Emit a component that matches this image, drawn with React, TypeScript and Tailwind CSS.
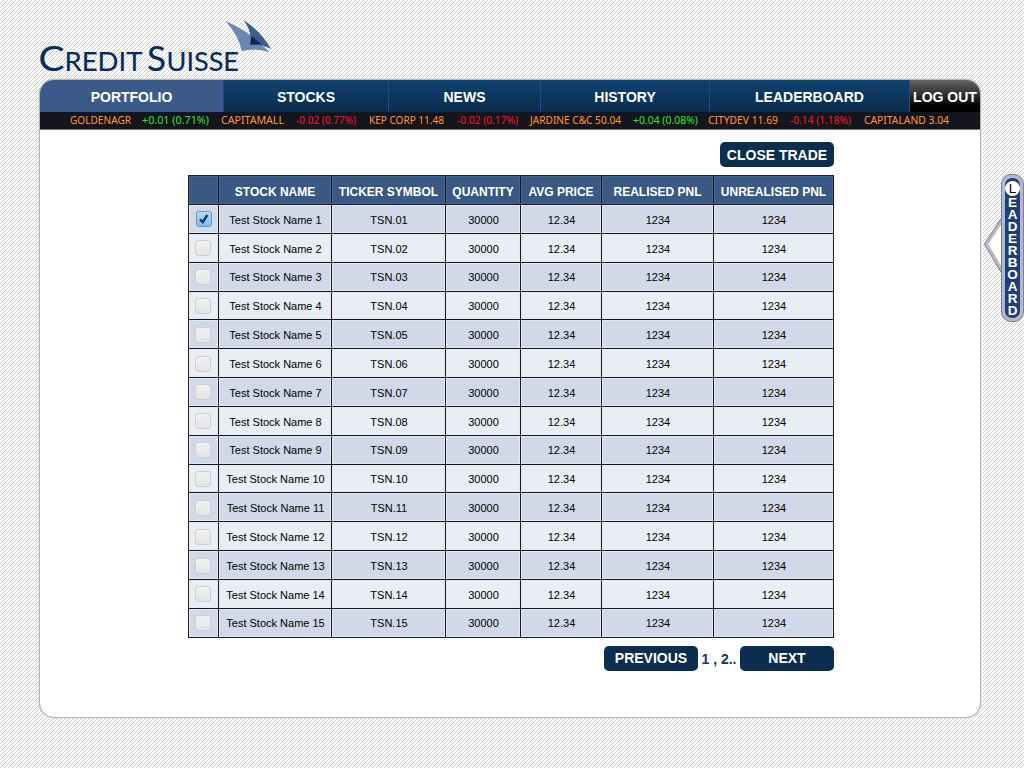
import React from "react";

const navItems = [
  { label: "PORTFOLIO", cls: "w-[183px] bg-[#3b5a88]" },
  { label: "STOCKS", cls: "w-[165px] border-l border-[#1c4a94] bg-linear-to-b from-[#0f4270] to-[#0d2c4c]" },
  { label: "NEWS", cls: "w-[152px] border-l border-[#1c4a94] bg-linear-to-b from-[#0f4270] to-[#0d2c4c]" },
  { label: "HISTORY", cls: "w-[169px] border-l border-[#1c4a94] bg-linear-to-b from-[#0f4270] to-[#0d2c4c]" },
  { label: "LEADERBOARD", cls: "w-[201px] border-x border-[#1c4a94] bg-linear-to-b from-[#0f4270] to-[#0d2c4c]" },
  { label: "LOG OUT", cls: "w-[70px] bg-linear-to-b from-[#666464] via-[#2c2a2a] to-[#000000]" },
];

// Each quote owns a fixed slot of the ticker; `len` is the drawn width.
const quotes = [
  { text: "GOLDENAGR", slot: 72, len: 61, cls: "fill-[#ff9a2e]" },
  { text: "+0.01 (0.71%)", slot: 79, len: 67, cls: "fill-[#2fe332]" },
  { text: "CAPITAMALL", slot: 75, len: 63, cls: "fill-[#ff9a2e]" },
  { text: "-0.02 (0.77%)", slot: 73, len: 60, cls: "fill-[#f5152c]" },
  { text: "KEP CORP 11.48", slot: 88, len: 75, cls: "fill-[#ff9a2e]" },
  { text: "-0.02 (0.17%)", slot: 73, len: 61, cls: "fill-[#f5152c]" },
  { text: "JARDINE C&C 50.04", slot: 103, len: 91, cls: "fill-[#ff9a2e]" },
  { text: "+0.04 (0.08%)", slot: 75, len: 65, cls: "fill-[#2fe332]" },
  { text: "CITYDEV 11.69", slot: 82, len: 70, cls: "fill-[#ff9a2e]" },
  { text: "-0.14 (1.18%)", slot: 74, len: 61, cls: "fill-[#f5152c]" },
  { text: "CAPITALAND 3.04", slot: 90, len: 85, cls: "fill-[#ff9a2e]" },
];

const gridCols = "grid grid-cols-[30px_113px_114px_75px_81px_112px_120px]";
const headers = ["", "STOCK NAME", "TICKER SYMBOL", "QUANTITY", "AVG PRICE", "REALISED PNL", "UNREALISED PNL"];
const rows = Array.from({ length: 15 }, (_, i) => i + 1);

function Logo() {
  return (
    <svg width="240" height="62" viewBox="36 18 240 62" className="overflow-visible" role="img">
      <g fill="#0a2b57" stroke="#0a2b57" strokeWidth=".15" fontFamily="Lato, sans-serif">
        <text x="38.5" y="70.6" fontSize="34.5" textLength="26" lengthAdjust="spacingAndGlyphs">C</text>
        <text x="64.5" y="70.6" fontSize="27.5" textLength="78" lengthAdjust="spacingAndGlyphs">REDIT</text>
        <text x="147" y="70.6" fontSize="34.5" textLength="19" lengthAdjust="spacingAndGlyphs">S</text>
        <text x="166.5" y="70.6" fontSize="27.5" textLength="72.5" lengthAdjust="spacingAndGlyphs">UISSE</text>
      </g>
      <path d="M225.500 21 Q241 28 251.500 36 L269.500 52 Q256 47.500 241.700 51 Q239 36 225.500 21Z" fill="#6d86b1" />
      <path d="M243.300 20 Q261 31 271 49 Q262 44.300 250 44.500 Q252.500 31 243.300 20Z" fill="#3c5c8b" />
      <path d="M251.500 36 L261.500 44 L250.300 44.700Z" fill="#0b2858" />
    </svg>
  );
}

function CheckBox({ checked }: { checked: boolean }) {
  return checked ? (
    <span className="mb-px flex size-4 items-center justify-center rounded-[3px] border border-[#6795bd] bg-linear-to-b from-[#b5dcf8] to-[#7fbbe9]">
      <svg width="10" height="10" viewBox="0 0 10 10">
        <path d="M1 5.300 L3.800 8 L8.300 1" fill="none" stroke="#173b60" strokeWidth="2.400" />
      </svg>
    </span>
  ) : (
    <span className="mr-[2px] mb-px size-4 rounded-[3px] border border-[#cfcfd2] bg-linear-to-b from-[#f1f1f1] to-[#e4e4e5]" />
  );
}

function ActionButton({ label, wide }: { label: string; wide?: string }) {
  return (
    <button className={`flex h-[25px] items-center justify-center rounded-[5px] bg-[#0d2d4e] pt-px text-[14px] font-bold text-white ${wide}`}>
      {label}
    </button>
  );
}

function SideTab() {
  return (
    <aside className="absolute top-[174px] right-0 flex">
      <svg className="relative z-30 -mr-1 mt-[41px]" width="21" height="62" viewBox="0 0 21 62">
        <path d="M20 2.500 L2.500 29 L20 58.500" fill="none" stroke="#77778a" strokeWidth="4.500" />
        <path d="M20 2.500 L2.500 29 L20 58.500" fill="#fff" stroke="#b6b6d0" strokeWidth="3" />
        <path d="M17.500 0V62" stroke="#80808f" />
        <path d="M19.500 0V62" stroke="#b6b6d0" strokeWidth="3" />
      </svg>
      <div className="z-20 h-[148px] w-[23px] rounded-[10px] border border-[#80808f] bg-[#b6b6d0] p-[3px]">
        <div className="flex h-full flex-col items-center rounded-[7px] bg-[#213f73] pt-[3px] text-[13.5px] leading-[12px] font-bold text-white">
          <span className="mb-px flex size-[15px] shrink-0 items-center justify-center rounded-full bg-white font-normal text-black">L</span>
          {"EADERBOARD".split("").map((c, i) => (
            <span key={i} className="h-[12px]">{c}</span>
          ))}
        </div>
      </div>
    </aside>
  );
}

export default function App() {
  return (
    <div className="relative h-[768px] w-[1024px] overflow-hidden bg-[repeating-linear-gradient(135deg,#cfcfcf_0px,#cfcfcf_0.7071px,#fafafa_0.7071px,#fafafa_2.8284px)] pt-[18px] font-['Liberation_Sans',Arial,sans-serif]">
      <header className="ml-9 h-[61px]">
        <Logo />
      </header>
      <main className="ml-[39px] flex h-[639px] w-[942px] flex-col overflow-hidden rounded-[15px] border border-[#b5b5b5] bg-white shadow-[0_0_1px_#999]">
        <nav className="flex h-[32px] shrink-0">
          {navItems.map((n) => (
            <a key={n.label} className={`flex shrink-0 items-center justify-center pt-[3px] text-[14px] font-bold whitespace-nowrap text-white ${n.cls}`}>
              {n.label}
            </a>
          ))}
        </nav>
        <div className="flex h-[18px] shrink-0 border-b border-[#777] bg-[#15151e] pl-[30px]">
          {quotes.map((q, i) => (
            <span key={i} className="shrink-0" style={{ width: q.slot }}>
              <svg width={q.len} height="17" className="block overflow-visible">
                <text x="0" y="12" fontSize="10" fontFamily="Noto Sans, sans-serif" textLength={q.len} lengthAdjust="spacingAndGlyphs" className={q.cls}>
                  {q.text}
                </text>
              </svg>
            </span>
          ))}
        </div>

        <section className="ml-[148px] flex w-[646px] flex-col pt-3">
          <div className="flex h-[33px] justify-end">
            <ActionButton label="CLOSE TRADE" wide="w-[114px]" />
          </div>
          <div className="w-[646px] border-t border-l border-[#222]">
            <div className={`${gridCols} h-[29px] bg-[#3a5884] text-[12px] font-bold text-white`}>
              {headers.map((h, i) => (
                <div key={i} className="flex items-center justify-center border-r border-b border-[#16181d] pt-[3px] whitespace-nowrap shadow-[inset_0_0_0_1px_#46658f]">
                  {h}
                </div>
              ))}
            </div>
            {rows.map((n) => (
              <div key={n} className={`${gridCols} h-[28.85px] text-[11px] text-black ${n % 2 ? "bg-[#d1d8e8]" : "bg-[#e9edf4]"}`}>
                {["", `Test Stock Name ${n}`, `TSN.${String(n).padStart(2, "0")}`, "30000", "12.34", "1234", "1234"].map((v, i) => (
                  <div key={i} className="flex items-center justify-center border-r border-b border-[#16181d] pt-[2px] pl-px whitespace-nowrap shadow-[inset_0_0_0_1px_#e4e8f3]">
                    {i === 0 ? <CheckBox checked={n === 1} /> : v}
                  </div>
                ))}
              </div>
            ))}
          </div>
          <div className="mt-2 flex items-center justify-end">
            <ActionButton label="PREVIOUS" wide="w-[94px]" />
            <span className="w-[42px] pt-[2px] text-center text-[14px] font-bold whitespace-nowrap text-[#17365a]">1 , 2..</span>
            <ActionButton label="NEXT" wide="w-[94px]" />
          </div>
        </section>
      </main>
      <SideTab />
    </div>
  );
}
